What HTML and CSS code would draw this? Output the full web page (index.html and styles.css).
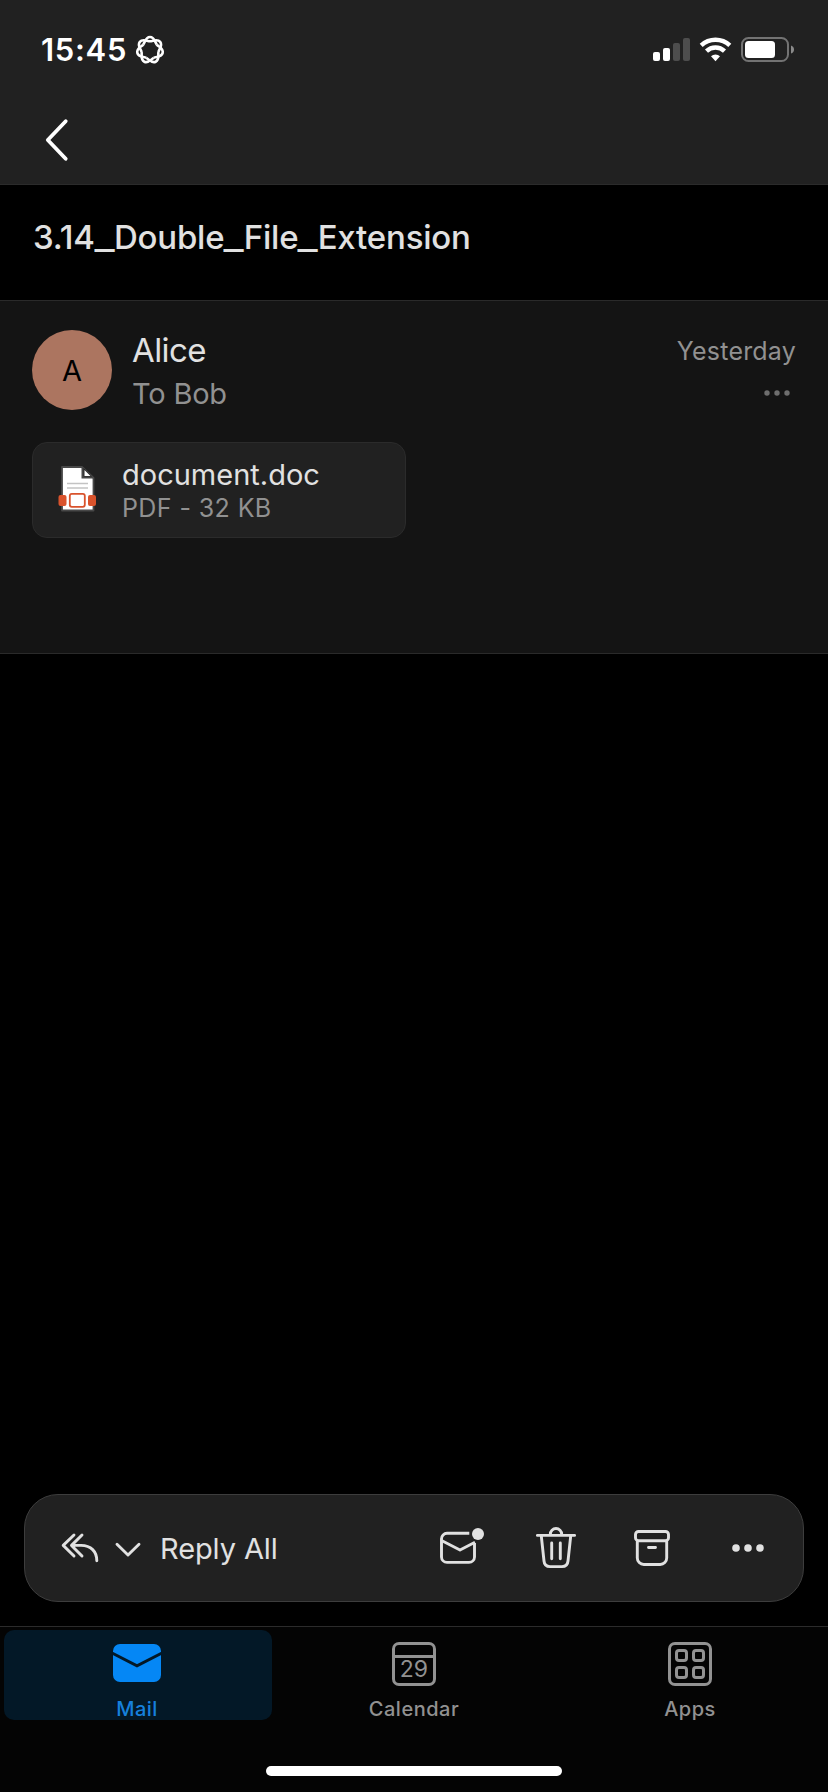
FILE: index.html
```html
<!DOCTYPE html>
<html lang="en">
<head>
<meta charset="utf-8">
<title>Mail</title>
<link rel="stylesheet" href="styles.css">
</head>
<body>
<header class="header">
  <div class="status">
    <span class="time">15:45</span>
    <svg class="focus" width="30" height="30" viewBox="-15 -15 30 30">
      <defs><path id="petal" d="M-6.800-5.400C-4.900-7.800-4.600-13 0-13S4.900-7.800 6.800-5.400"/></defs>
      <use href="#petal"/><use href="#petal" transform="rotate(51.43)"/><use href="#petal" transform="rotate(102.86)"/><use href="#petal" transform="rotate(154.29)"/><use href="#petal" transform="rotate(205.71)"/><use href="#petal" transform="rotate(257.14)"/><use href="#petal" transform="rotate(308.57)"/>
    </svg>
    <svg class="signals" width="142" height="26" viewBox="0 0 142 26">
      <g fill="#fff"><rect y="15" width="7" height="9" rx="2"/><rect x="10" y="11" width="7" height="13" rx="2"/></g>
      <g fill="#4d4d4d"><rect x="20" y="6" width="7" height="18" rx="2"/><rect x="30" y="1" width="7" height="23" rx="2"/></g>
      <g fill="none" stroke="#fff" stroke-width="4.4"><path d="M48.2 8.4A20.8 20.8 0 0 1 76.8 8.4"/><path d="M53.5 14.1A13 13 0 0 1 71.5 14.1"/></g>
      <path d="M62.5 24.2L58 19.2A6.5 6.5 0 0 1 67 19.2Z" fill="#fff"/>
      <rect x="89" y="1" width="46" height="23" rx="6.5" fill="none" stroke="#737373" stroke-width="2"/>
      <rect x="92" y="4" width="30" height="17" rx="3.5" fill="#fff"/>
      <path d="M138 8.5Q141 9.500 141 12.500T138 16.500Z" fill="#8a8a8a"/>
    </svg>
  </div>
  <nav class="nav">
    <svg class="line back" width="24" height="44" viewBox="0 0 24 44"><path d="M20.700 3.200L2.800 22L20.700 40.800"/></svg>
  </nav>
</header>

<h1 class="subject">3.14<span class="underscore">_</span>Double<span class="underscore">_</span>File<span class="underscore">_</span>Extension</h1>

<article class="message">
  <div class="sender">
    <div class="avatar">A</div>
    <div class="people">
      <div class="from">Alice</div>
      <div class="to">To Bob</div>
    </div>
    <div class="meta">
      <div class="date">Yesterday</div>
      <svg class="more" width="26" height="8" viewBox="0 0 26 8"><circle cx="3" cy="4" r="2.700"/><circle cx="13" cy="4" r="2.700"/><circle cx="23" cy="4" r="2.700"/></svg>
    </div>
  </div>
  <div class="attachment">
    <svg width="40" height="48" viewBox="0 0 40 48">
      <path d="M4 2H24L35.500 13V45.500H4Z" fill="#fff" stroke="#484848" stroke-width="1.800" stroke-linejoin="round"/>
      <path d="M24.500 2V12.500H35" fill="#252525" stroke="#484848" stroke-width="2"/>
      <path d="M26.500 5L32.500 11H26.500Z" fill="#fff"/>
      <path d="M9 18.500H30M9 23H30" stroke="#c3c3c3" stroke-width="1.600"/>
      <rect x=".5" y="30" width="8" height="11" rx="2" fill="#d9532c"/><rect x="30" y="30" width="8" height="11" rx="2" fill="#d9532c"/>
      <rect x="11.800" y="28.800" width="15" height="13" rx="2" fill="#fff" stroke="#d9532c" stroke-width="1.800"/>
    </svg>
    <div class="file">
      <div class="file-name">document.doc</div>
      <div class="file-info">PDF - 32 KB</div>
    </div>
  </div>
</article>

<main class="space"></main>

<section class="toolbar">
  <svg class="line" width="40" height="48" viewBox="0 0 40 48"><path d="M13 11L2.200 21.400L13 32M21 11L10.500 21.400L21 32M11 21.400H20C30 21.400 35.800 27.500 35.800 36.800"/></svg>
  <svg class="line chevron" width="28" height="48" viewBox="0 0 28 48"><path d="M3 20.200L14 31L25 20.200"/></svg>
  <span class="reply">Reply All</span>
  <div class="actions">
    <svg class="line" width="48" height="48" viewBox="0 0 48 48"><path d="M33.300 9.300H11A5.500 5.500 0 0 0 5.500 14.800V33A5.500 5.500 0 0 0 11 38.400H33A5.500 5.500 0 0 0 38.500 33V19" stroke-linecap="butt"/><path d="M6 16.700L24 26L39 18.300" stroke-linecap="butt"/><circle class="solid" cx="42" cy="10" r="6"/></svg>
    <svg class="line" width="48" height="48" viewBox="0 0 48 48"><path d="M5.400 11.400H42.600M18.300 11V10.200A5.700 5.700 0 0 1 29.700 10.200V11M9.300 12L12 37Q12.500 42.600 18 42.600H30Q35.500 42.600 36 37L38.700 12M19.700 19V34.800M28.300 19V34.800"/></svg>
    <svg class="line" width="48" height="48" viewBox="0 0 48 48"><rect x="7.500" y="7.500" width="33" height="9.200" rx="3"/><path d="M9.300 17V34A6.500 6.500 0 0 0 15.800 40.500H32.200A6.500 6.500 0 0 0 38.700 34V17M20.500 23.500H27.500"/></svg>
    <svg class="line" width="48" height="48" viewBox="0 0 48 48"><g class="solid"><circle cx="12" cy="24" r="3.800"/><circle cx="24" cy="24" r="3.800"/><circle cx="36" cy="24" r="3.800"/></g></svg>
  </div>
</section>

<footer class="tabs">
  <div class="tab active">
    <svg width="48" height="44" viewBox="0 0 48 44"><rect y="2" width="48" height="38" rx="7" fill="#0587f5"/><path d="M-1 11L24 23.800L49 11" fill="none" stroke="#031827" stroke-width="3"/></svg>
    <span>Mail</span>
  </div>
  <div class="tab">
    <div class="calendar">29</div>
    <span>Calendar</span>
  </div>
  <div class="tab">
    <svg width="44" height="44" viewBox="0 0 44 44" fill="none" stroke="#929292" stroke-width="3"><rect x="1.500" y="1.500" width="41" height="41" rx="5.500"/><rect x="8.500" y="8.500" width="10" height="10" rx="2.500"/><rect x="25.500" y="8.500" width="10" height="10" rx="2.500"/><rect x="8.500" y="25.500" width="10" height="10" rx="2.500"/><rect x="25.500" y="25.500" width="10" height="10" rx="2.500"/></svg>
    <span>Apps</span>
  </div>
  <div class="home"></div>
</footer>
</body>
</html>
```
FILE: styles.css
```css
* { box-sizing: border-box; }
body {
  margin: 0;
  height: 1792px;
  display: flex;
  flex-direction: column;
  background: #000;
  color: #e1e1e1;
  font-family: Inter, "Liberation Sans", sans-serif;
  white-space: nowrap;
}
svg { display: block; flex: none; overflow: visible; }
.line { fill: none; stroke: #e1e1e1; stroke-width: 2.9; stroke-linecap: round; stroke-linejoin: round; }
.line .solid { fill: #e1e1e1; stroke: none; }

.header { height: 185px; background: #212121; border-bottom: 1px solid #2b2b2b; }
.status { height: 99px; display: flex; align-items: center; padding: 0 33px 0 41px; color: #fff; }
.time { width: 94px; font-size: 31px; font-weight: 600; letter-spacing: 0.7px; }
.focus { fill: none; stroke: #fff; stroke-width: 2.6; }
.signals { margin-left: auto; }
.nav { height: 82px; display: flex; align-items: center; padding-left: 45px; }
.back { stroke: #fff; stroke-width: 3.8; }

.subject { margin: 0; height: 115px; padding: 32px 0 0 33px; font-size: 33px; line-height: 40px; font-weight: 500; letter-spacing: -0.2px; }
.underscore { display: inline-block; margin: 0 2px; transform: scaleX(1.32); letter-spacing: 0; }

.message { height: 354px; padding: 29px 32px 0; background: #141414; border-top: 1px solid #2a2a2a; border-bottom: 1px solid #2a2a2a; }
.sender { display: flex; height: 112px; }
.avatar { width: 80px; height: 80px; border-radius: 50%; background: #ac7560; color: #000; font-size: 29px; line-height: 82px; text-align: center; }
.people { padding-left: 20px; }
.from { font-size: 33px; line-height: 40px; letter-spacing: -0.6px; }
.to { font-size: 29px; line-height: 44px; padding-top: 2px; color: #919191; letter-spacing: -0.2px; }
.meta { margin-left: auto; display: flex; flex-direction: column; align-items: flex-end; color: #919191; }
.date { font-size: 25px; line-height: 42px; letter-spacing: 0.2px; }
.more { margin: 17px 6px 0 0; fill: #6e6e6e; }

.attachment { width: 374px; height: 96px; display: flex; padding: 22px 0 0 25px; background: #212121; border: 1px solid #2b2b2b; border-radius: 15px; }
.file { padding-left: 24px; margin-top: -7px; }
.file-name { font-size: 29px; line-height: 34px; }
.file-info { font-size: 25px; line-height: 32px; color: #919191; letter-spacing: 0.4px; }

.space { flex: 1; }

.toolbar { height: 108px; margin: 0 24px 24px; padding: 0 31px 0 36px; display: flex; align-items: center; background: #212121; border: 1px solid #3d3d3d; border-radius: 34px; }
.chevron { margin-left: 13px; }
.reply { margin-left: 18px; font-size: 29px; letter-spacing: -0.1px; }
.actions { margin-left: auto; display: flex; gap: 48px; }

.tabs { height: 166px; display: grid; grid-template-columns: repeat(3, 276px); grid-template-rows: 90px auto; padding-top: 3px; background: #040404; border-top: 1px solid #2b2b2b; color: #919191; }
.tab { display: flex; flex-direction: column; align-items: center; margin: 0 4px; padding-top: 12px; border-radius: 10px; font-size: 20px; font-weight: 500; line-height: 24px; }
.tab span { margin-top: 11px; letter-spacing: 0.5px; }
.active { background: #031827; color: #1680dc; padding-right: 2px; }
.calendar { flex: none; width: 44px; height: 44px; border: 3px solid #929292; border-radius: 7px; font-size: 23px; line-height: 23px; font-weight: 400; text-align: center; }
.calendar::before { content: ""; display: block; height: 10px; border-bottom: 3px solid #929292; }
.home { grid-column: 1 / -1; justify-self: center; margin-top: 46px; width: 296px; height: 10px; border-radius: 5px; background: #fff; }
```
